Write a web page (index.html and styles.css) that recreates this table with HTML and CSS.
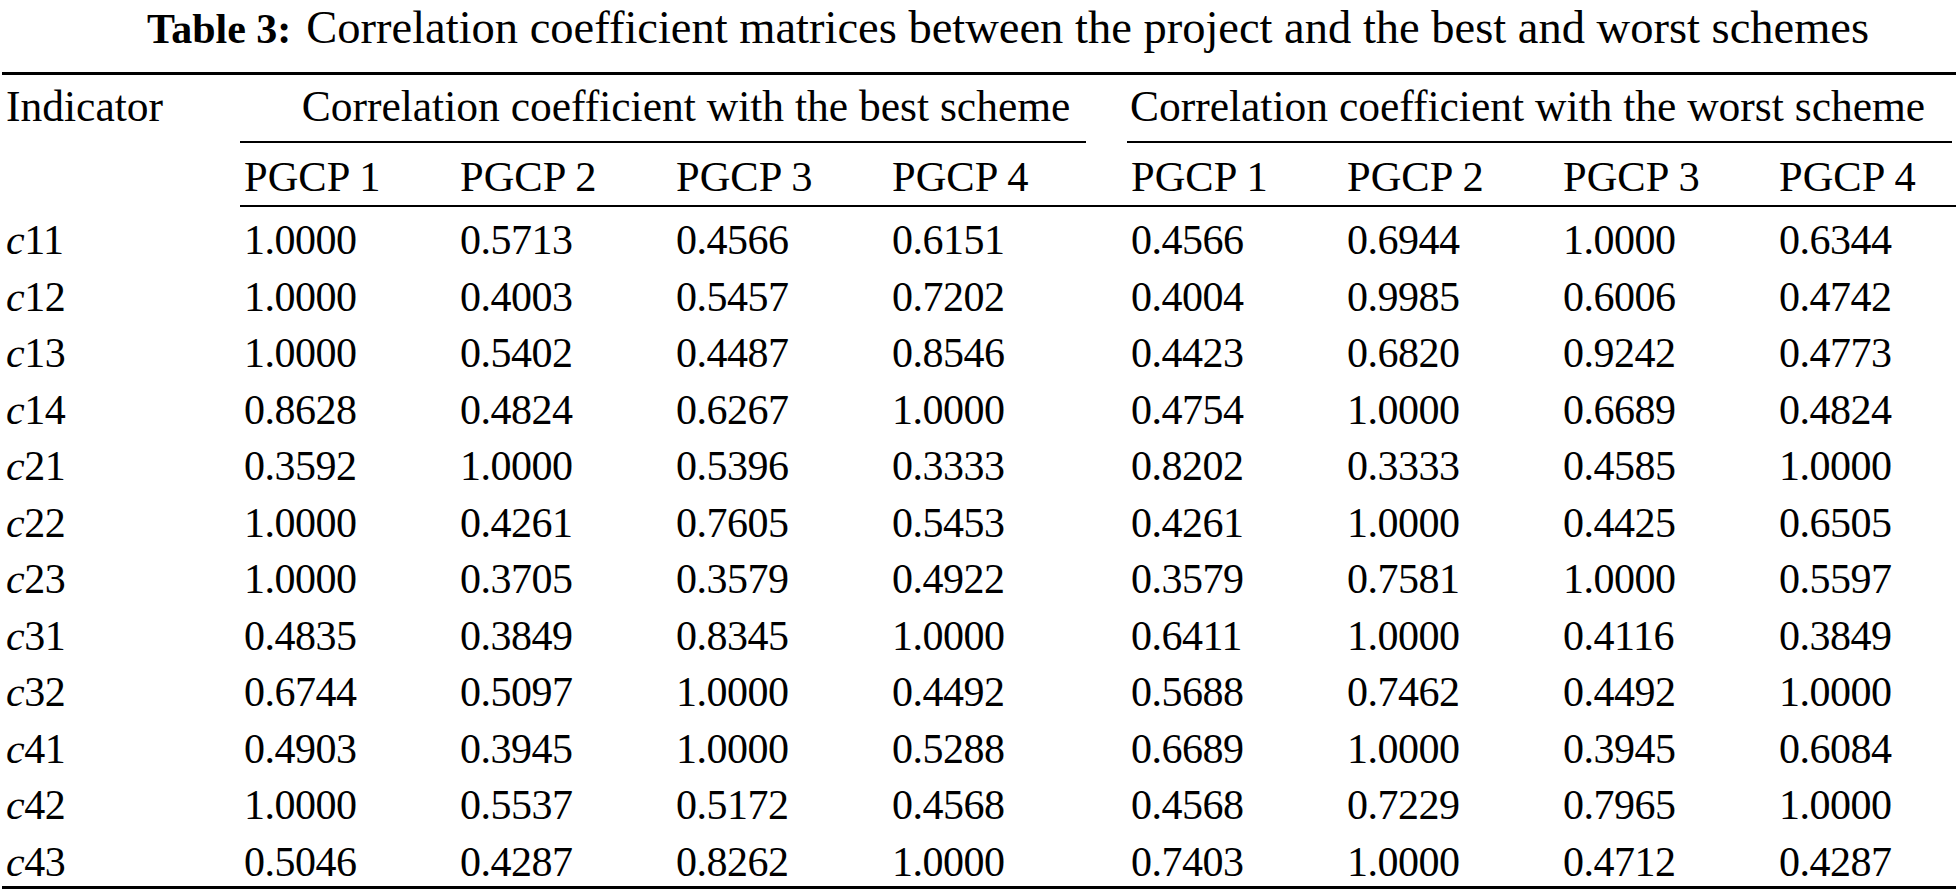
FILE: index.html
```html
<!DOCTYPE html>
<html>
<head>
<meta charset="utf-8">
<link rel="stylesheet" href="styles.css">
</head>
<body>
<div class="page">
  <div class="caption"><b>Table 3:</b><span class="ctext">Correlation coefficient matrices between the project and the best and worst schemes</span></div>
  <table class="tbl">
    <colgroup>
      <col class="c-ind"><col class="c-d"><col class="c-d"><col class="c-d"><col class="c-d4">
      <col class="c-d"><col class="c-d"><col class="c-d"><col class="c-last">
    </colgroup>
    <thead>
      <tr class="h1">
        <th rowspan="2" class="ind">Indicator</th>
        <th colspan="4" class="grp gl"><div class="cmid left">Correlation coefficient with the best scheme</div></th>
        <th colspan="4" class="grp gr"><div class="cmid right">Correlation coefficient with the worst scheme</div></th>
      </tr>
      <tr class="h2">
        <th>PGCP 1</th><th>PGCP 2</th><th>PGCP 3</th><th>PGCP 4</th>
        <th>PGCP 1</th><th>PGCP 2</th><th>PGCP 3</th><th>PGCP 4</th>
      </tr>
    </thead>
    <tbody>
      <tr><td><i>c</i>11</td><td>1.0000</td><td>0.5713</td><td>0.4566</td><td>0.6151</td><td>0.4566</td><td>0.6944</td><td>1.0000</td><td>0.6344</td></tr>
      <tr><td><i>c</i>12</td><td>1.0000</td><td>0.4003</td><td>0.5457</td><td>0.7202</td><td>0.4004</td><td>0.9985</td><td>0.6006</td><td>0.4742</td></tr>
      <tr><td><i>c</i>13</td><td>1.0000</td><td>0.5402</td><td>0.4487</td><td>0.8546</td><td>0.4423</td><td>0.6820</td><td>0.9242</td><td>0.4773</td></tr>
      <tr><td><i>c</i>14</td><td>0.8628</td><td>0.4824</td><td>0.6267</td><td>1.0000</td><td>0.4754</td><td>1.0000</td><td>0.6689</td><td>0.4824</td></tr>
      <tr><td><i>c</i>21</td><td>0.3592</td><td>1.0000</td><td>0.5396</td><td>0.3333</td><td>0.8202</td><td>0.3333</td><td>0.4585</td><td>1.0000</td></tr>
      <tr><td><i>c</i>22</td><td>1.0000</td><td>0.4261</td><td>0.7605</td><td>0.5453</td><td>0.4261</td><td>1.0000</td><td>0.4425</td><td>0.6505</td></tr>
      <tr><td><i>c</i>23</td><td>1.0000</td><td>0.3705</td><td>0.3579</td><td>0.4922</td><td>0.3579</td><td>0.7581</td><td>1.0000</td><td>0.5597</td></tr>
      <tr><td><i>c</i>31</td><td>0.4835</td><td>0.3849</td><td>0.8345</td><td>1.0000</td><td>0.6411</td><td>1.0000</td><td>0.4116</td><td>0.3849</td></tr>
      <tr><td><i>c</i>32</td><td>0.6744</td><td>0.5097</td><td>1.0000</td><td>0.4492</td><td>0.5688</td><td>0.7462</td><td>0.4492</td><td>1.0000</td></tr>
      <tr><td><i>c</i>41</td><td>0.4903</td><td>0.3945</td><td>1.0000</td><td>0.5288</td><td>0.6689</td><td>1.0000</td><td>0.3945</td><td>0.6084</td></tr>
      <tr><td><i>c</i>42</td><td>1.0000</td><td>0.5537</td><td>0.5172</td><td>0.4568</td><td>0.4568</td><td>0.7229</td><td>0.7965</td><td>1.0000</td></tr>
      <tr class="last"><td><i>c</i>43</td><td>0.5046</td><td>0.4287</td><td>0.8262</td><td>1.0000</td><td>0.7403</td><td>1.0000</td><td>0.4712</td><td>0.4287</td></tr>
    </tbody>
  </table>
</div>
</body>
</html>
```

FILE: styles.css
```css
html, body {
  margin: 0;
  padding: 0;
  background: #fff;
}
.page {
  width: 1958px;
  font-family: "Liberation Serif", "Times New Roman", serif;
  font-size: 43.5px;
  color: #000;
}
.caption {
  padding-left: 147px;
  height: 72px;
  line-height: 56px;
  white-space: nowrap;
}
.caption b {
  font-weight: bold;
  font-size: 42px;
}
.caption .ctext {
  font-size: 46.5px;
  margin-left: 15px;
}
.tbl {
  margin-left: 2px;
  width: 1954px;
  border-collapse: collapse;
  table-layout: fixed;
  border-top: 3px solid #000;
  border-bottom: 3px solid #000;
}
.c-ind { width: 238px; }
.c-d { width: 216px; }
.c-d4 { width: 239px; }
.c-last { width: 181px; }
.tbl th, .tbl td {
  padding: 0 0 0 4px;
  text-align: left;
  font-weight: normal;
  white-space: nowrap;
  line-height: 56.5px;
}
.tbl td {
  font-size: 42px;
  letter-spacing: -0.5px;
}
.tbl th.ind {
  vertical-align: top;
  padding-top: 3px;
}
.h1 .grp {
  padding: 3px 0 0 0;
  text-align: center;
}
.h1 .grp.gr {
  padding-right: 4px;
}
.cmid {
  border-bottom: 2px solid #000;
  padding-bottom: 6px;
}
.cmid.left {
  margin-right: 41px;
  text-indent: 46px;
}
.cmid.right {
  text-indent: -24px;
}
.h2 th {
  padding-top: 6px;
  border-bottom: 2px solid #000;
  font-size: 42.5px;
}
.tbl tbody tr:first-child td {
  padding-top: 5px;
}
.tbl tbody tr.last td {
  line-height: 48.5px;
  padding-top: 4px;
}
.tbl td i {
  font-style: italic;
}
```
